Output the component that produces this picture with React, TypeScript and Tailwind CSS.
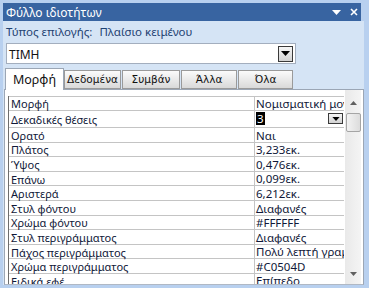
import React from "react";

const rows = [
  { label: "Μορφή", value: "Νομισματική μονάδα" },
  { label: "Δεκαδικές θέσεις", value: "3", edit: true },
  { label: "Ορατό", value: "Ναι" },
  { label: "Πλάτος", value: "3,233εκ." },
  { label: "Ύψος", value: "0,476εκ." },
  { label: "Επάνω", value: "0,099εκ." },
  { label: "Αριστερά", value: "6,212εκ." },
  { label: "Στυλ φόντου", value: "Διαφανές" },
  { label: "Χρώμα φόντου", value: "#FFFFFF" },
  { label: "Στυλ περιγράμματος", value: "Διαφανές" },
  { label: "Πάχος περιγράμματος", value: "Πολύ λεπτή γραμμή" },
  { label: "Χρώμα περιγράμματος", value: "#C0504D" },
  { label: "Ειδικά εφέ", value: "Επίπεδο" },
];

const tabs = ["Δεδομένα", "Συμβάν", "Άλλα", "Όλα"];
const tabWidths = ["w-[57px]", "w-[58px]", "w-[56px]", "w-[55px]"];

function DropArrow({ small }: { small?: boolean }) {
  return (
    <svg width={small ? 8 : 9} height={small ? 4 : 5} viewBox="0 0 9 5">
      <path d="M0 0h9L4.5 5z" fill="#000" />
    </svg>
  );
}

export default function App() {
  return (
    <div
      className="w-[369px] h-[288px] bg-[#b8d0ef] pt-[3px] pl-[3px] pr-[5px] pb-[3px] flex flex-col overflow-hidden"
      style={{ fontFamily: '"Noto Sans", "DejaVu Sans", sans-serif' }}
    >
      {/* title bar */}
      <div className="h-[18px] w-[358px] shrink-0 bg-[#3864a1] flex items-center justify-between pl-[3px] pr-[3px] text-white text-[12px] leading-none">
        <span className="pt-[1px]">Φύλλο ιδιοτήτων</span>
        <div className="flex items-center gap-[9px]">
          <svg width="9" height="5" viewBox="0 0 9 5">
            <path d="M0 0h9L4.5 5z" fill="#fff" />
          </svg>
          <svg width="8" height="8" viewBox="0 0 8 8">
            <path d="M1 1l6 6M7 1L1 7" stroke="#fff" strokeWidth="1.6" />
          </svg>
        </div>
      </div>

      {/* body */}
      <div className="flex-1 min-h-0 bg-[#d5e4f5] flex flex-col">
        <div className="h-[19px] shrink-0 pl-[3px] pt-[2px] flex items-center text-[11.5px] text-[#1f4272] leading-none">
          <span>Τύπος επιλογής:</span>
          <span className="ml-[7px]">Πλαίσιο κειμένου</span>
        </div>

        {/* combo */}
        <div className="mt-[3px] ml-[3px] shrink-0 w-[290px] h-[21px] bg-white border border-[#a3aebe] flex items-center justify-between pl-[2px] pr-[2px]">
          <span className="text-[12px] text-[#111] pt-[2px]">ΤΙΜΗ</span>
          <div className="w-[15px] h-[16px] border border-[#3a3a3a] bg-gradient-to-b from-[#f6f6f6] to-[#d2d2d2] flex items-center justify-center">
            <DropArrow />
          </div>
        </div>

        {/* tabs */}
        <div className="mt-[4px] h-[21px] shrink-0 flex items-end pl-[2px] relative z-10">
          <div className="w-[59px] h-[22px] bg-white border border-b-0 border-[#9ba6b5] flex items-center justify-center text-[12.5px] text-[#111] -mb-[1px] pt-[1px]">
            Μορφή
          </div>
          {tabs.map((t, i) => (
            <div
              key={t}
              className={`${tabWidths[i]} h-[19px] mr-[1px] bg-gradient-to-b from-[#fbfbfb] to-[#d9d9d9] border border-[#9a9a9a] flex items-center justify-center text-[10.5px] text-[#111] pt-[1px]`}
              style={{ fontFamily: '"DejaVu Sans", sans-serif' }}
            >
              {t}
            </div>
          ))}
        </div>

        {/* panel */}
        <div className="flex-1 min-h-0 ml-[1px] bg-white border border-[#9ba6b5] border-b-[#b0b8c4] pt-[6px] pl-[3px] flex overflow-hidden">
          <div className="w-[336px] flex flex-col border-l border-[#6d6d6d] overflow-hidden">
            {rows.map((r, i) => (
              <div
                key={r.label}
                className={`${i === 1 ? "h-[17.5px]" : i === 0 ? "h-[14.5px]" : "h-[14.6px]"} shrink-0 flex border-b border-[#c4c4c4] ${i === 0 ? "border-t" : ""} text-[11px] text-[#101838] leading-none`}
              >
                <div className="w-[246px] border-r border-[#c4c4c4] pl-[2px] pt-[1px] flex items-center whitespace-nowrap">
                  {r.label}
                </div>
                <div className="flex-1 min-w-0 pl-[1px] flex items-center justify-between overflow-hidden whitespace-nowrap text-[11.5px]">
                  {r.edit ? (
                    <>
                      <span className="bg-black text-white px-[1px] h-[13px] flex items-center">{r.value}</span>
                      <div className="w-[15px] h-[11px] mr-[1px] border border-[#3a3a3a] bg-gradient-to-b from-[#f6f6f6] to-[#d2d2d2] flex items-end justify-center pb-[2px]">
                        <DropArrow small />
                      </div>
                    </>
                  ) : (
                    <span className="pt-[1px]">{r.value}</span>
                  )}
                </div>
              </div>
            ))}
          </div>

          {/* scrollbar */}
          <div className="w-[16px] ml-[1px] -mt-[6px] pt-[6px] bg-gradient-to-r from-[#e9e9e9] to-[#f4f4f4] flex flex-col items-center">
            <div className="h-[14px] flex items-center justify-center">
              <svg width="7" height="4" viewBox="0 0 7 4">
                <path d="M0 4h7L3.5 0z" fill="#606060" />
              </svg>
            </div>
            <div className="w-[15px] h-[19px] mt-[3px] border border-[#a5a5a5] rounded-[2px] bg-gradient-to-r from-[#f3f3f3] to-[#dcdcdc]" />
            <div className="flex-1" />
            <div className="h-[20px] flex items-center justify-center">
              <svg width="7" height="4" viewBox="0 0 7 4">
                <path d="M0 0h7L3.5 4z" fill="#606060" />
              </svg>
            </div>
          </div>
        </div>
      </div>
    </div>
  );
}
